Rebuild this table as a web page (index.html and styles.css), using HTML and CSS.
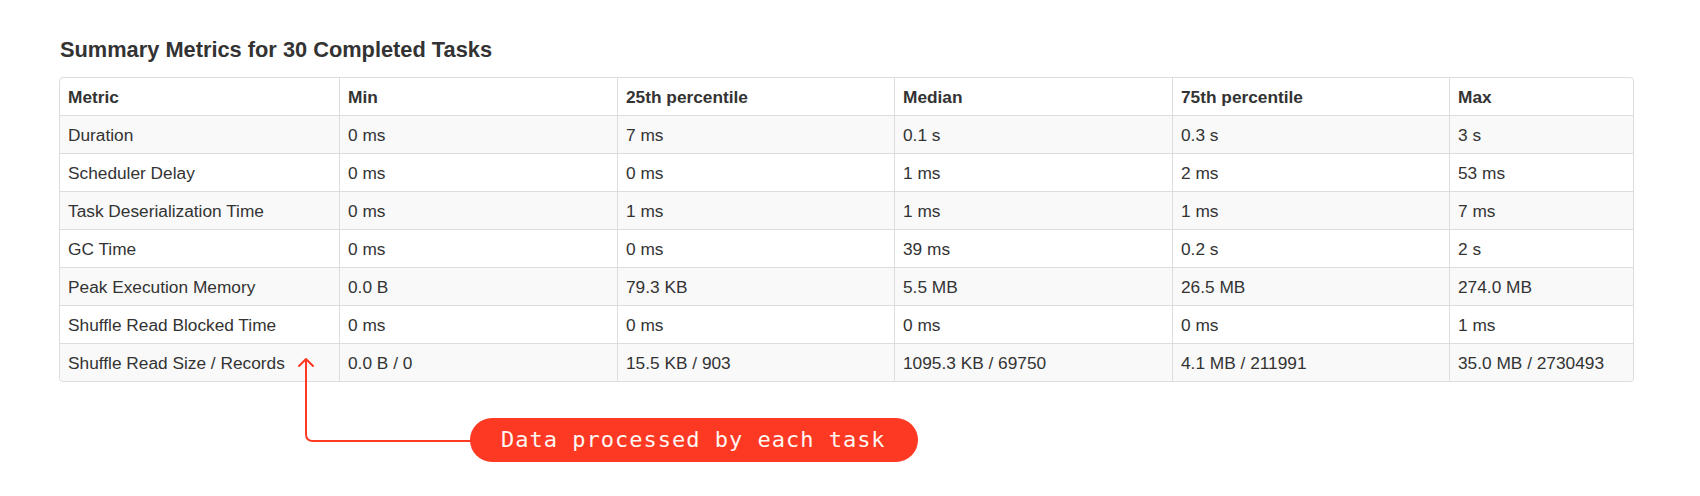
FILE: index.html
```html
<!DOCTYPE html>
<html>
<head>
<meta charset="utf-8">
<link rel="stylesheet" href="styles.css">
</head>
<body>
<div class="page">
  <h4 class="title">Summary Metrics for 30 Completed Tasks</h4>
  <table class="metrics">
    <colgroup>
      <col class="c-metric"><col class="c-min"><col class="c-p25"><col class="c-med"><col class="c-p75"><col class="c-max">
    </colgroup>
    <thead>
      <tr><th>Metric</th><th>Min</th><th>25th percentile</th><th>Median</th><th>75th percentile</th><th>Max</th></tr>
    </thead>
    <tbody>
      <tr><td>Duration</td><td>0 ms</td><td>7 ms</td><td>0.1 s</td><td>0.3 s</td><td>3 s</td></tr>
      <tr><td>Scheduler Delay</td><td>0 ms</td><td>0 ms</td><td>1 ms</td><td>2 ms</td><td>53 ms</td></tr>
      <tr><td>Task Deserialization Time</td><td>0 ms</td><td>1 ms</td><td>1 ms</td><td>1 ms</td><td>7 ms</td></tr>
      <tr><td>GC Time</td><td>0 ms</td><td>0 ms</td><td>39 ms</td><td>0.2 s</td><td>2 s</td></tr>
      <tr><td>Peak Execution Memory</td><td>0.0 B</td><td>79.3 KB</td><td>5.5 MB</td><td>26.5 MB</td><td>274.0 MB</td></tr>
      <tr><td>Shuffle Read Blocked Time</td><td>0 ms</td><td>0 ms</td><td>0 ms</td><td>0 ms</td><td>1 ms</td></tr>
      <tr><td>Shuffle Read Size / Records</td><td>0.0 B / 0</td><td>15.5 KB / 903</td><td>1095.3 KB / 69750</td><td>4.1 MB / 211991</td><td>35.0 MB / 2730493</td></tr>
    </tbody>
  </table>

  <svg class="arrow" width="200" height="100" viewBox="0 0 200 100" xmlns="http://www.w3.org/2000/svg">
    <path d="M10 4 V79 Q10 86 17 86 H180" fill="none" stroke="#fe3923" stroke-width="2"/>
    <path d="M3 11 L10 4 L17 11" fill="none" stroke="#fe3923" stroke-width="2" stroke-linecap="round" stroke-linejoin="round"/>
  </svg>
  <div class="callout">Data processed by each task</div>
</div>
</body>
</html>
```

FILE: styles.css
```css
html, body {
  margin: 0;
  padding: 0;
  background: #ffffff;
}

.page {
  position: relative;
  width: 1700px;
  height: 496px;
  padding: 37px 0 0 59px;
  box-sizing: border-box;
  font-family: "Liberation Sans", Arial, Helvetica, sans-serif;
  color: #333333;
}

.title {
  margin: 0 0 15px 1px;
  font-size: 21.8px;
  line-height: 25px;
  font-weight: bold;
  color: #333333;
}

.metrics {
  width: 1575px;
  table-layout: fixed;
  border-collapse: separate;
  border-spacing: 0;
  border: 1px solid #dddddd;
  border-radius: 4px;
  font-size: 17.3px;
  line-height: 20px;
}

.c-metric { width: 279px; }
.c-min { width: 278px; }
.c-p25 { width: 277px; }
.c-med { width: 278px; }
.c-p75 { width: 277px; }
.c-max { width: auto; }

.metrics th,
.metrics td {
  height: 37px;
  padding: 0 8px;
  text-align: left;
  vertical-align: middle;
  white-space: nowrap;
  border-left: 1px solid #dddddd;
}

.metrics th:first-child,
.metrics td:first-child {
  border-left: none;
}

.metrics td {
  border-top: 1px solid #dddddd;
}

.metrics th {
  font-weight: bold;
}

.metrics tbody tr:nth-child(odd) td {
  background: #f9f9f9;
}

.metrics tbody tr:last-child td:first-child {
  border-bottom-left-radius: 4px;
}

.metrics tbody tr:last-child td:last-child {
  border-bottom-right-radius: 4px;
}

.arrow {
  position: absolute;
  left: 296px;
  top: 355px;
  overflow: visible;
}

.callout {
  position: absolute;
  left: 470px;
  top: 418px;
  height: 44px;
  padding: 0 32px 0 31px;
  border-radius: 22px;
  background: #fe3923;
  color: #fff6f2;
  font-family: "DejaVu Sans Mono", "Liberation Mono", monospace;
  font-size: 22px;
  line-height: 44px;
  letter-spacing: 1px;
  white-space: nowrap;
}
```
